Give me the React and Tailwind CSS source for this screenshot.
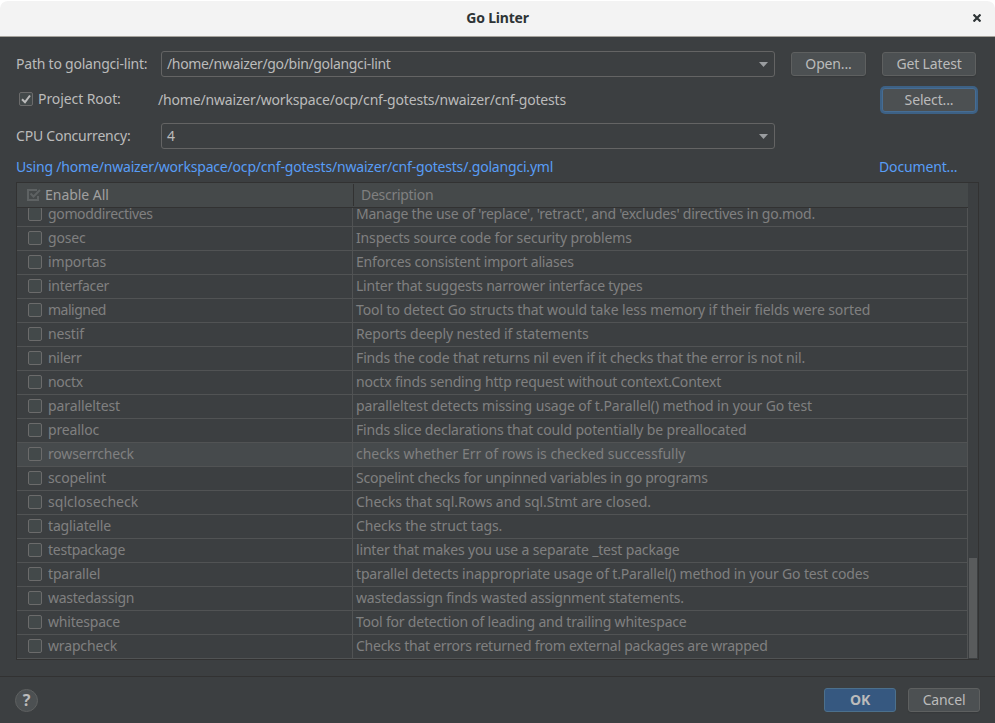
const linters = [
  ["gomoddirectives", "Manage the use of 'replace', 'retract', and 'excludes' directives in go.mod.", "tracking-[-0.23px]", "tracking-[-0.35px]"],
  ["gosec", "Inspects source code for security problems", "tracking-[-0.15px]"],
  ["importas", "Enforces consistent import aliases", "tracking-[-0.18px]"],
  ["interfacer", "Linter that suggests narrower interface types", "tracking-[-0.22px]", "tracking-[-0.3px]"],
  ["maligned", "Tool to detect Go structs that would take less memory if their fields were sorted", "tracking-[-0.09px]", "tracking-[-0.5px]"],
  ["nestif", "Reports deeply nested if statements", "tracking-[-0.12px]"],
  ["nilerr", "Finds the code that returns nil even if it checks that the error is not nil.", "tracking-[-0.14px]", "tracking-[-0.3px]"],
  ["noctx", "noctx finds sending http request without context.Context", "tracking-[-0.17px]", "tracking-[-0.3px]"],
  ["paralleltest", "paralleltest detects missing usage of t.Parallel() method in your Go test", "tracking-[-0.12px]", "tracking-[-0.1px]"],
  ["prealloc", "Finds slice declarations that could potentially be preallocated", "tracking-[-0.15px]"],
  ["rowserrcheck", "checks whether Err of rows is checked successfully", "tracking-[-0.03px]", "tracking-[-0.18px]"],
  ["scopelint", "Scopelint checks for unpinned variables in go programs", "tracking-[-0.25px]"],
  ["sqlclosecheck", "Checks that sql.Rows and sql.Stmt are closed.", "tracking-[-0.06px]", "tracking-[0.04px]"],
  ["tagliatelle", "Checks the struct tags.", "tracking-[-0.11px]"],
  ["testpackage", "linter that makes you use a separate _test package", "tracking-[-0.17px]", "tracking-[-0.24px]"],
  ["tparallel", "tparallel detects inappropriate usage of t.Parallel() method in your Go test codes", "tracking-[-0.16px]"],
  ["wastedassign", "wastedassign finds wasted assignment statements.", "tracking-[-0.21px]", "tracking-[-0.25px]"],
  ["whitespace", "Tool for detection of leading and trailing whitespace", "tracking-[-0.21px]", "tracking-[-0.2px]"],
  ["wrapcheck", "Checks that errors returned from external packages are wrapped", "tracking-[-0.25px]"],
];

function Combo({ children }) {
  return (
    <div className="flex h-[26px] w-[614px] items-center justify-between rounded-[3px] border border-[#646464] pr-1.5 pl-[5px]">
      {children}
      <svg width="9" height="5" viewBox="0 0 9 5" fill="#9a9da0">
        <path d="M0 0h9L4.500 5z" />
      </svg>
    </div>
  );
}

function Button({ children, className }) {
  return (
    <button className={`flex h-6 items-center justify-center rounded-[3px] border ${className}`}>
      {children}
    </button>
  );
}

const plain = "border-[#5e6060] bg-[#4c5052] shadow-[0_1px_1px_#36393b]";

export default function App() {
  return (
    <div className="flex h-[723px] w-[995px] flex-col overflow-hidden bg-[#3c3f41] font-['Noto_Sans','Open_Sans',sans-serif] text-[14px] leading-5 tracking-[-0.15px] whitespace-nowrap text-[#bbbbbb]">
      <div className="h-[37px] shrink-0 bg-white">
        <header className="grid h-full grid-cols-[1fr_auto_1fr] items-center rounded-t-lg border-t border-b border-t-white border-b-[#a5a29b] bg-[#f3f3f3] pb-px text-[#2e3436]">
          <h1 className="col-start-2 text-sm font-bold tracking-[-0.2px]">Go Linter</h1>
          <svg className="mr-[14px] justify-self-end" width="8" height="8" viewBox="0 0 8 8" stroke="#2e3436" strokeWidth="2.2">
            <path d="M.5.5l7 7M7.500.5l-7 7" />
          </svg>
        </header>
      </div>

      <section className="flex h-[145px] shrink-0 flex-col pt-3.5 pl-4">
        <div className="flex h-[26px] items-center">
          <span className="w-[145px] tracking-[-0.22px]">Path to golangci-lint:</span>
          <Combo>
            <span className="tracking-[-0.34px]">/home/nwaizer/go/bin/golangci-lint</span>
          </Combo>
          <Button className={`ml-4 w-[75px] ${plain}`}>Open...</Button>
          <Button className={`ml-4 w-[94px] ${plain}`}>Get Latest</Button>
        </div>
        <div className="mt-2.5 flex h-[26px] items-center">
          <div className="flex w-[142px] items-center pb-0.5 pl-[3px]">
            <span className="mr-[5px] flex size-3.5 items-center justify-center rounded-[2px] border border-[#6b6b6b] bg-[#43494a]">
              <svg width="10" height="10" viewBox="0 0 10 10" fill="none" stroke="#bbbbbb" strokeWidth="2">
                <path d="M1 5.200L4 8.200L9 1.500" />
              </svg>
            </span>
            <span className="tracking-[-0.08px]">Project Root:</span>
          </div>
          <span className="w-[724px] tracking-[-0.17px]">/home/nwaizer/workspace/ocp/cnf-gotests/nwaizer/cnf-gotests</span>
          <Button className="w-[94px] border-[#466d94] bg-[#4c5052] ring-2 ring-[#3d6185]">Select...</Button>
        </div>
        <div className="mt-2.5 flex h-[26px] items-center">
          <span className="w-[145px] tracking-[-0.22px]">CPU Concurrency:</span>
          <Combo>
            <span>4</span>
          </Combo>
        </div>
        <div className="mt-2 flex h-5 items-center text-[#589df6]">
          <a className="w-[863px] tracking-[-0.19px]">Using /home/nwaizer/workspace/ocp/cnf-gotests/nwaizer/cnf-gotests/.golangci.yml</a>
          <a>Document...</a>
        </div>
      </section>

      <section className="ml-4 flex h-[478px] w-[963px] shrink-0 border border-[#323232] text-[#808080]">
        <div className="flex w-[951px] flex-col">
          <div className="flex h-[25px] shrink-0 items-center border-b border-[#323232] bg-[#45494a]">
            <div className="flex w-[336px] items-center pl-2.5 text-[#a0a0a0]">
              <svg className="mr-1" width="14" height="12" viewBox="0 0 14 12" fill="none" stroke="#5e6263">
                <path d="M10 1H1v10h10V7" strokeWidth="2" />
                <path d="M3.500 4.500L6.500 7.500L13 1" strokeWidth="2" />
              </svg>
              <span className="tracking-[-0.03px]">Enable All</span>
            </div>
            <div className="flex h-[22px] items-center border-l border-[#323232] pl-[7px] tracking-[-0.28px]">Description</div>
          </div>
          <div className="flex h-[451px] flex-col justify-end overflow-hidden">
            {linters.map(([name, description, tracking, nameTracking = ""]) => (
              <div
                key={name}
                className={`flex h-6 shrink-0 items-center border-b border-[#515354] ${name === "rowserrcheck" ? "bg-[#464a4c]" : ""}`}
              >
                <div className="flex h-full w-[336px] items-center border-r border-[#515354] pb-px pl-[11px]">
                  <span className="mr-1.5 size-3.5 rounded-[2px] border border-[#6b6b6b] bg-[#43494a]" />
                  <span className={nameTracking}>{name}</span>
                </div>
                <div className={`flex h-full flex-1 items-center border-r border-[#515354] pb-px pl-[3px] ${tracking}`}>
                  {description}
                </div>
              </div>
            ))}
          </div>
        </div>
        <div className="flex flex-1 flex-col justify-end px-px pb-px">
          <div className="h-[100px] bg-[#595b5c]" />
        </div>
      </section>

      <footer className="mt-4 flex h-[47px] items-center border-t border-[#323232] pl-[15px]">
        <span className="flex size-[23px] items-center justify-center rounded-full border border-[#5e6060] bg-[#4c5052] text-base font-bold">?</span>
        <Button className="ml-[786px] w-[72px] border-[#4c708c] bg-[#365880] font-bold">OK</Button>
        <Button className={`ml-3 w-[72px] ${plain}`}>Cancel</Button>
      </footer>
    </div>
  );
}
